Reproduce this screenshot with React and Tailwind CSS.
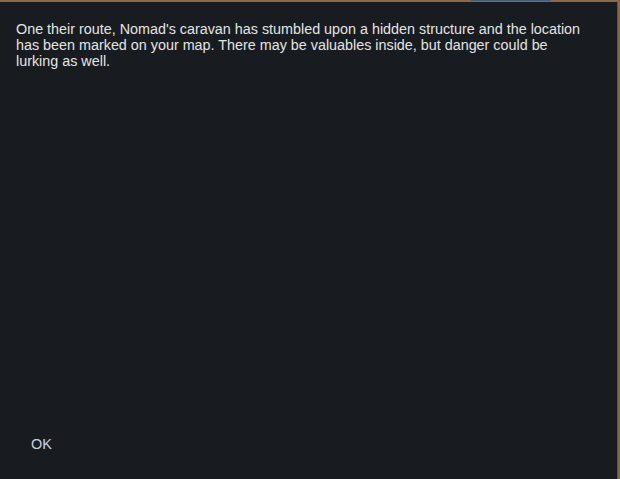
import React from "react";

const App = () => {
  return (
    <div className="h-[479px] w-[620px] overflow-hidden bg-[#8a6a44] font-['Liberation_Sans',Arial,sans-serif]">
      {/* strip of the map peeking above the dialog */}
      <div className="relative h-[2px]">
        <div className="absolute left-[471px] top-0 h-[1px] w-[80px] bg-[#4b5a78]" />
      </div>
      <div className="flex h-[477px] w-[618px] flex-col border-r border-[#4f5566] bg-[#181b20]">
        <p className="px-4 pt-[19px] text-[14.35px] leading-4 text-[#e4e4e4]">
          One their route, Nomad's caravan has stumbled upon a hidden structure and the location
          <br />
          has been marked on your map. There may be valuables inside, but danger could be
          <br />
          lurking as well.
        </p>
        <div className="mt-auto pb-[23px] pl-[31px]">
          <button className="text-[14.5px] leading-4 text-[#c9d1ea]">OK</button>
        </div>
      </div>
    </div>
  );
};

export default App;
